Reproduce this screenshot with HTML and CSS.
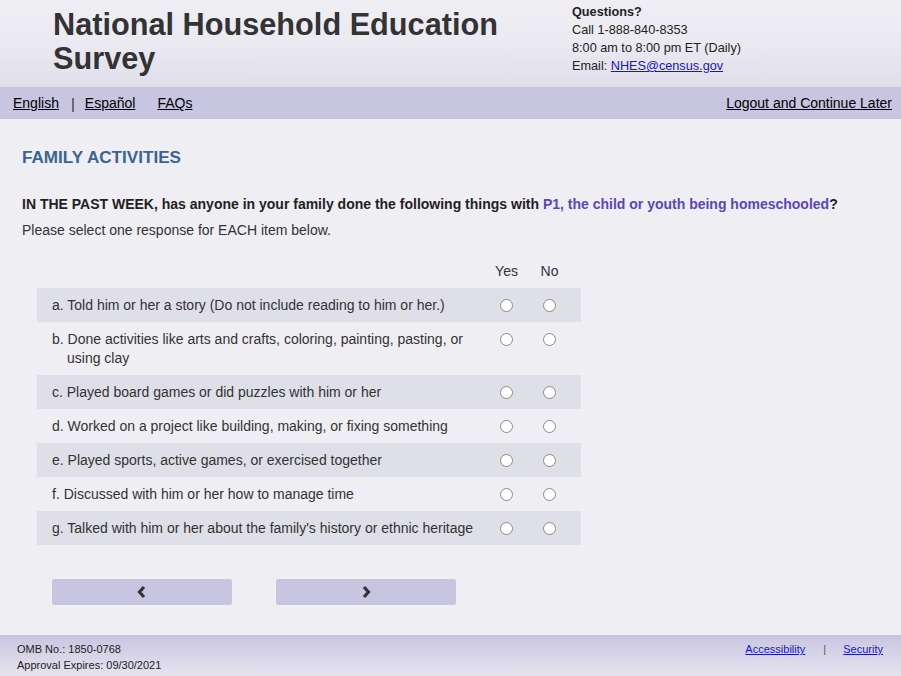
FILE: index.html
```html
<!DOCTYPE html>
<html lang="en">
<head>
  <meta charset="UTF-8">
  <meta name="viewport" content="width=device-width, initial-scale=1.0">
  <title>National Household Education Survey</title>
  <link rel="stylesheet" href="styles.css">
</head>
<body>
  <header class="site-header">
    <div class="site-title">National Household Education<br>Survey</div>
    <div class="contact">
      <div class="contact-head">Questions?</div>
      <div>Call 1-888-840-8353</div>
      <div>8:00 am to 8:00 pm ET (Daily)</div>
      <div>Email: <a href="#">NHES@census.gov</a></div>
    </div>
  </header>

  <nav class="topnav">
    <div class="lang-links">
      <a href="#">English</a>
      <span class="sep">|</span>
      <a href="#">Español</a>
      <a href="#" class="faq">FAQs</a>
    </div>
    <a href="#">Logout and Continue Later</a>
  </nav>

  <main class="content">
    <h1 class="section-title">FAMILY ACTIVITIES</h1>
    <p class="question">IN THE PAST WEEK, has anyone in your family done the following things with <span class="subject">P1, the child or youth being homeschooled</span>?</p>
    <p class="instruction">Please select one response for EACH item below.</p>

    <table class="grid">
      <thead>
        <tr>
          <th></th>
          <th class="opt">Yes</th>
          <th class="opt">No</th>
          <th class="pad"></th>
        </tr>
      </thead>
      <tbody>
        <tr class="shade">
          <td class="item">a. Told him or her a story (Do not include reading to him or her.)</td>
          <td class="opt"><input type="radio" name="a"></td>
          <td class="opt"><input type="radio" name="a"></td>
          <td class="pad"></td>
        </tr>
        <tr>
          <td class="item">b. Done activities like arts and crafts, coloring, painting, pasting, or using clay</td>
          <td class="opt"><input type="radio" name="b"></td>
          <td class="opt"><input type="radio" name="b"></td>
          <td class="pad"></td>
        </tr>
        <tr class="shade">
          <td class="item">c. Played board games or did puzzles with him or her</td>
          <td class="opt"><input type="radio" name="c"></td>
          <td class="opt"><input type="radio" name="c"></td>
          <td class="pad"></td>
        </tr>
        <tr>
          <td class="item">d. Worked on a project like building, making, or fixing something</td>
          <td class="opt"><input type="radio" name="d"></td>
          <td class="opt"><input type="radio" name="d"></td>
          <td class="pad"></td>
        </tr>
        <tr class="shade">
          <td class="item">e. Played sports, active games, or exercised together</td>
          <td class="opt"><input type="radio" name="e"></td>
          <td class="opt"><input type="radio" name="e"></td>
          <td class="pad"></td>
        </tr>
        <tr>
          <td class="item">f. Discussed with him or her how to manage time</td>
          <td class="opt"><input type="radio" name="f"></td>
          <td class="opt"><input type="radio" name="f"></td>
          <td class="pad"></td>
        </tr>
        <tr class="shade">
          <td class="item">g. Talked with him or her about the family's history or ethnic heritage</td>
          <td class="opt"><input type="radio" name="g"></td>
          <td class="opt"><input type="radio" name="g"></td>
          <td class="pad"></td>
        </tr>
      </tbody>
    </table>

    <div class="nav-buttons">
      <button class="nav-btn" aria-label="Previous">
        <svg width="12" height="14" viewBox="0 0 12 14"><polyline points="8,2 3.5,7 8,12" fill="none" stroke="#333" stroke-width="3.2"/></svg>
      </button>
      <button class="nav-btn" aria-label="Next">
        <svg width="12" height="14" viewBox="0 0 12 14"><polyline points="4,2 8.5,7 4,12" fill="none" stroke="#333" stroke-width="3.2"/></svg>
      </button>
    </div>
  </main>

  <footer class="site-footer">
    <div class="omb">
      <div>OMB No.: 1850-0768</div>
      <div>Approval Expires: 09/30/2021</div>
    </div>
    <div class="footer-links">
      <a href="#">Accessibility</a>
      <span class="sep">|</span>
      <a href="#">Security</a>
    </div>
  </footer>
</body>
</html>
```

FILE: styles.css
```css
:root {
  --bg: #efeef3;
  --band: #c8c5e0;
  --shade: #dfdfe7;
  --text: #333333;
  --heading: #3a6493;
  --subject: #5b47b8;
  --link-blue: #1515cc;
}

body {
  margin: 0;
  font-family: "Liberation Sans", Arial, sans-serif;
  font-size: 14px;
  color: var(--text);
  background-color: var(--bg);
}

a {
  color: #000;
}

.site-header {
  height: 87px;
  display: flex;
  background: linear-gradient(to bottom, #efeef3 0%, #ebeaf1 50%, #dfdeeb 100%);
}

.site-title {
  width: 519px;
  padding: 8px 0 0 53px;
  font-size: 30.7px;
  line-height: 34px;
  font-weight: 700;
  color: #333;
}

.contact {
  padding-top: 3px;
  font-size: 12.7px;
  line-height: 18px;
  color: #222;
}

.contact-head {
  font-weight: 700;
}

.contact a {
  color: var(--link-blue);
}

.topnav {
  height: 32px;
  display: flex;
  align-items: center;
  justify-content: space-between;
  padding: 0 9px 0 13px;
  background-color: var(--band);
  font-size: 14px;
}

.lang-links {
  display: flex;
  align-items: center;
}

.lang-links .sep {
  margin: 0 10px 0 12px;
  font-size: 15px;
}

.lang-links .faq {
  margin-left: 22px;
}

.content {
  padding: 0 22px;
}

.section-title {
  margin: 29px 0 0;
  font-size: 17.1px;
  line-height: 20px;
  color: var(--heading);
}

.question {
  margin: 27px 0 0;
  font-weight: 700;
  line-height: 18px;
  color: #222;
}

.question .subject {
  color: var(--subject);
}

.instruction {
  margin: 8px 0 0;
  line-height: 18px;
}

.grid {
  margin: 23px 0 0 15px;
  border-collapse: collapse;
  width: 544px;
}

.grid th {
  font-weight: 400;
  line-height: 18px;
  padding: 0 0 8px;
}

.grid td {
  padding: 8px 0 7px;
  line-height: 19px;
  vertical-align: top;
}

.grid tr.shade td {
  background-color: var(--shade);
}

.grid td.item {
  padding-left: 30px;
  padding-right: 4px;
  text-indent: -15px;
  width: 414px;
}

.grid .opt {
  width: 43px;
  text-align: center;
}

.grid .pad {
  width: 10px;
}

.grid input[type="radio"] {
  appearance: none;
  -webkit-appearance: none;
  width: 13px;
  height: 13px;
  margin: 3px 0 0;
  border: 1px solid #8a8a8a;
  border-radius: 50%;
  background-color: #fff;
  vertical-align: top;
}

.nav-buttons {
  display: flex;
  gap: 44px;
  margin: 34px 0 0 30px;
}

.nav-btn {
  width: 180px;
  height: 26px;
  border: none;
  border-radius: 2px;
  background-color: var(--band);
  display: flex;
  align-items: center;
  justify-content: center;
  padding: 0;
}

.site-footer {
  margin-top: 30px;
  height: 41px;
  display: flex;
  justify-content: space-between;
  padding: 6px 18px 0 17px;
  box-sizing: border-box;
  background: linear-gradient(to bottom, #c8c5e0 0%, #e6e4f0 100%);
  font-size: 11px;
  line-height: 16px;
  color: #222;
}

.footer-links a {
  color: var(--link-blue);
}

.footer-links .sep {
  margin: 0 14px 0 15px;
  color: #555;
}
```
